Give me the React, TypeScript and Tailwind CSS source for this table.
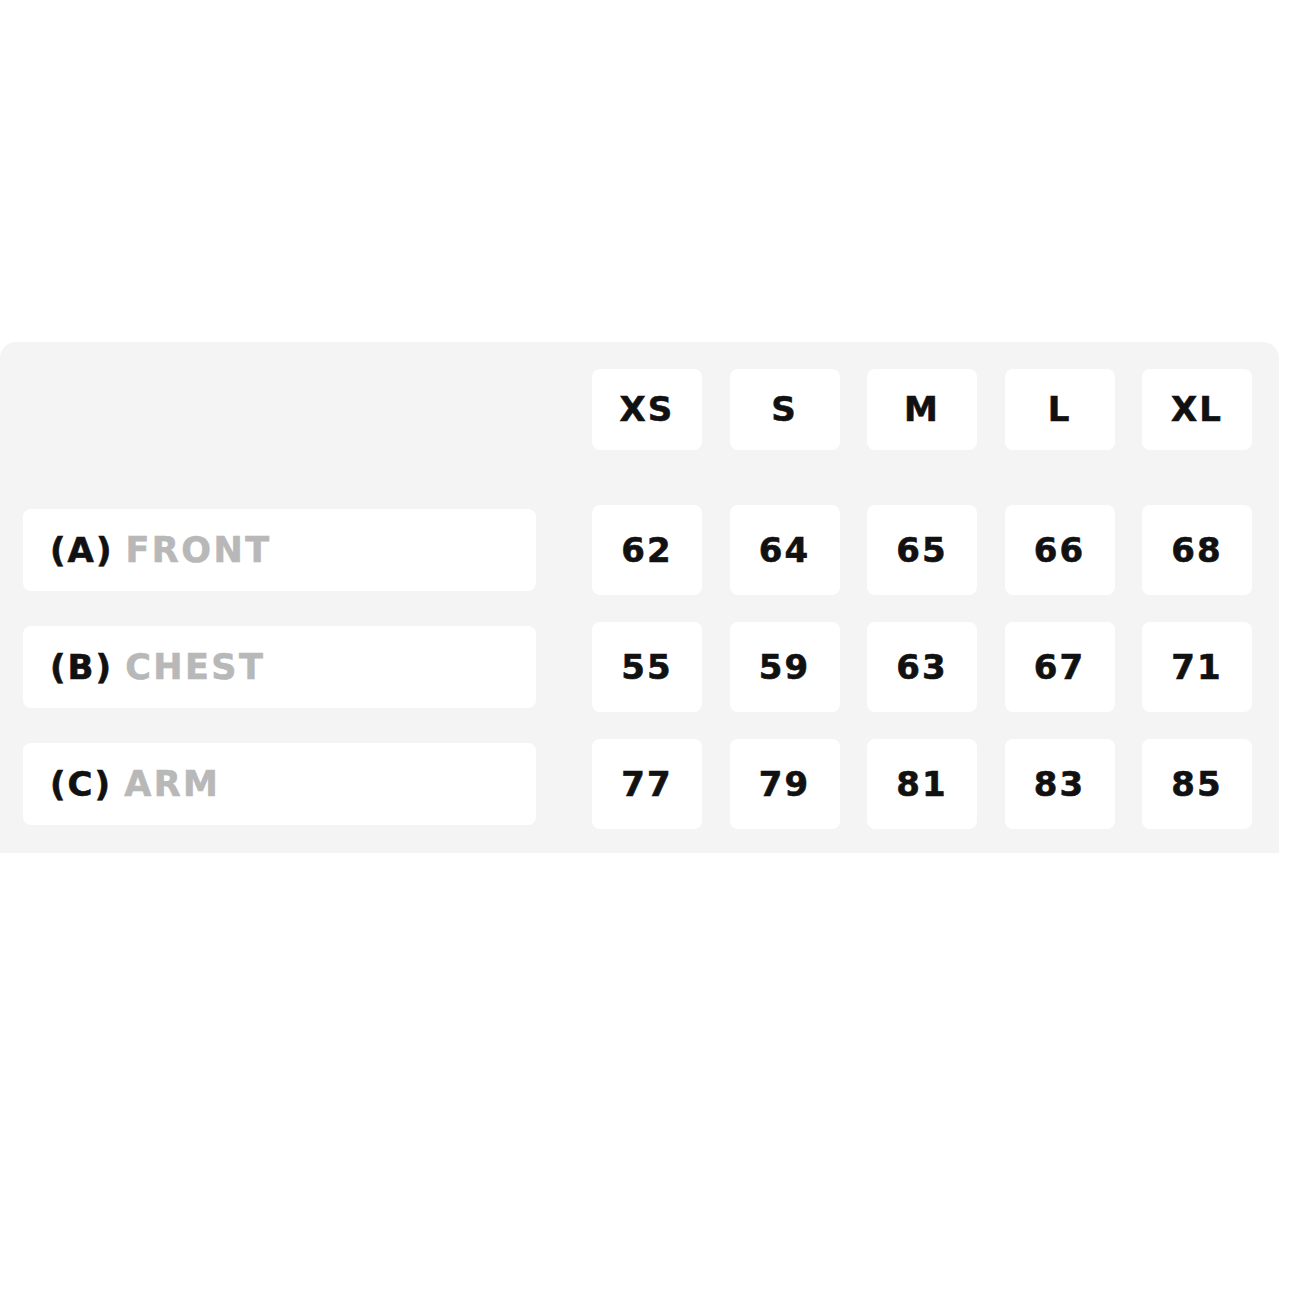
import React from "react";

const sizes = ["XS", "S", "M", "L", "XL"];
const rows = [
  { key: "(A)", name: "FRONT", values: ["62", "64", "65", "66", "68"] },
  { key: "(B)", name: "CHEST", values: ["55", "59", "63", "67", "71"] },
  { key: "(C)", name: "ARM", values: ["77", "79", "81", "83", "85"] },
];

const font = { fontFamily: '"DejaVu Sans", "Liberation Sans", sans-serif' };

export default function App() {
  return (
    <div className="w-[1300px] h-[1300px] bg-white pt-[342px]" style={font}>
      <div className="w-[1279px] bg-[#f4f4f4] rounded-t-[16px] pl-[23px] pt-[27px] pb-[24px]">
        <div className="flex">
          <div className="w-[513px] mr-[56px]" />
          <div className="flex gap-[27.5px]">
            {sizes.map((s) => (
              <div
                key={s}
                className="w-[110px] h-[81px] bg-white rounded-[8px] flex items-center justify-center text-[34px] font-bold tracking-[0.06em] text-[#111] [-webkit-text-stroke:0.6px_#111]"
              >
                {s}
              </div>
            ))}
          </div>
        </div>
        <div className="mt-[55px] flex flex-col gap-[27px]">
          {rows.map((r) => (
            <div key={r.key} className="flex items-center">
              <div className="w-[513px] mr-[56px] h-[82px] bg-white rounded-[8px] flex items-center pl-[27px] text-[34px] font-bold">
                <span className="text-[#111] tracking-[0.06em] [-webkit-text-stroke:0.6px_#111]">{r.key}</span>
                <span className="text-[#b8b8b8] ml-[12px] text-[35px] tracking-[0.07em] [-webkit-text-stroke:0.6px_#b8b8b8]">{r.name}</span>
              </div>
              <div className="flex gap-[27.5px]">
                {r.values.map((v, i) => (
                  <div
                    key={i}
                    className="w-[110px] h-[90px] bg-white rounded-[8px] flex items-center justify-center text-[34px] font-bold tracking-[0.06em] text-[#111] [-webkit-text-stroke:0.6px_#111]"
                  >
                    {v}
                  </div>
                ))}
              </div>
            </div>
          ))}
        </div>
      </div>
    </div>
  );
}
